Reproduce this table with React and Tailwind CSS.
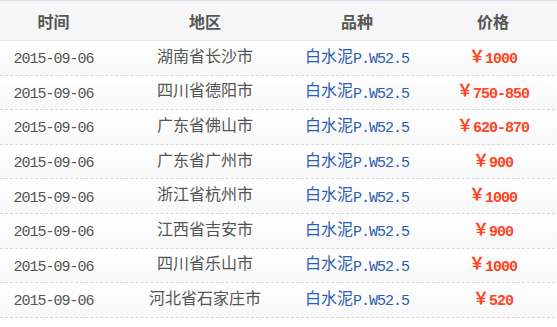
const rows = [
  { date: "2015-09-06", area: "湖南省长沙市", price: "1000" },
  { date: "2015-09-06", area: "四川省德阳市", price: "750-850" },
  { date: "2015-09-06", area: "广东省佛山市", price: "620-870" },
  { date: "2015-09-06", area: "广东省广州市", price: "900" },
  { date: "2015-09-06", area: "浙江省杭州市", price: "1000" },
  { date: "2015-09-06", area: "江西省吉安市", price: "900" },
  { date: "2015-09-06", area: "四川省乐山市", price: "1000" },
  { date: "2015-09-06", area: "河北省石家庄市", price: "520" },
];

const head = "font-['Noto_Sans_CJK_SC',sans-serif] text-[16px] leading-none";
// CJK glyphs sit low and Liberation Mono digits sit high: nudge them to a common centre
const cjk = `${head} pb-[6px]`;
const mono = "font-['Liberation_Mono','Noto_Sans_CJK_SC',monospace] text-[15px] leading-none tracking-[-1px] pt-[4px]";
const cols = "grid grid-cols-[107px_196px_108px_164px] items-center text-center";
const cell = "flex items-center justify-center";

function App() {
  return (
    <div className="h-[327px] w-[557px] overflow-hidden bg-white">
      <div className="w-[575px]">
        <div className={`${cols} h-[41px] border-t border-b border-t-[#d3e1f1] border-b-[#e6e6e6] bg-[#f6f6f6] font-bold text-[#555]`}>
          <div className={head}>时间</div>
          <div className={head}>地区</div>
          <div className={head}>品种</div>
          <div className={head}>价格</div>
        </div>

        {rows.map((row, i) => (
          <div
            key={i}
            className={`${cols} h-[34.6px] border-b border-dashed border-[#d8d8d8] bg-gradient-to-b from-white to-[#f8f8f8]`}
          >
            <div className={`${cell} text-[#555]`}>
              <span className={mono}>{row.date}</span>
            </div>
            <div className={`${cell} text-[#555]`}>
              <span className={cjk}>{row.area}</span>
            </div>
            <div className={`${cell} text-[#2b5db3]`}>
              <span className={cjk}>白水泥</span>
              <span className={mono}>P.W52.5</span>
            </div>
            <div className={`${cell} font-bold text-[#ff4422]`}>
              <span className={cjk}>￥</span>
              <span className={mono}>{row.price}</span>
            </div>
          </div>
        ))}
      </div>
    </div>
  );
}

export default App;
